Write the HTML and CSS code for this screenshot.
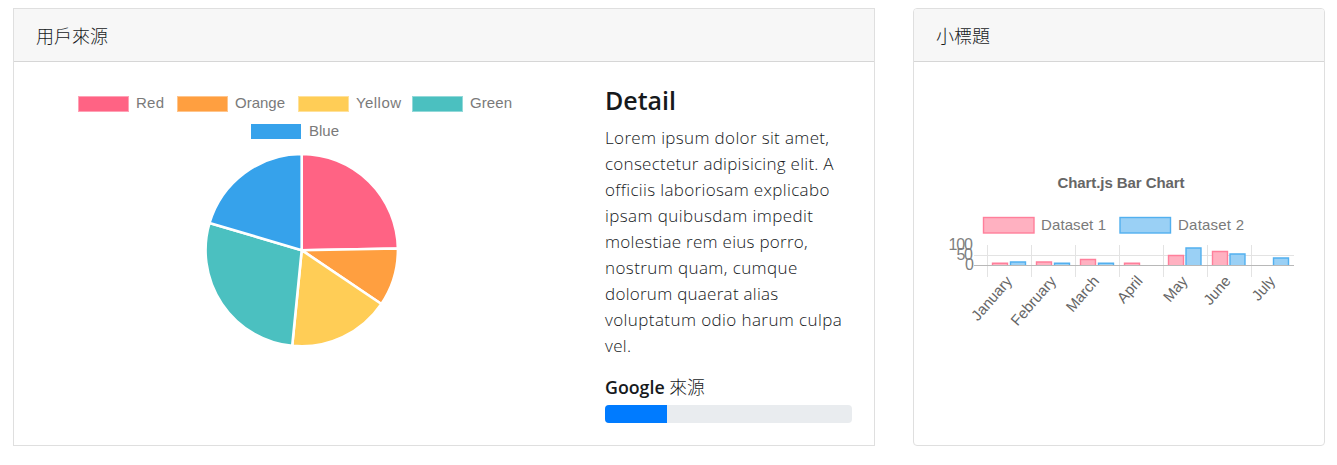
FILE: index.html
```html
<!DOCTYPE html>
<html lang="zh-Hant">
<head>
<meta charset="utf-8">
<title>用戶來源</title>
<link rel="stylesheet" href="styles.css">
</head>
<body>
<main class="cards">
  <section class="card card-source">
    <header class="card-header">用戶來源</header>
    <div class="card-body">
      <svg class="pie-chart" viewBox="36 62 569 383" role="img" aria-label="用戶來源">
        <g class="legend">
          <rect x="78.5" y="96.5" width="50" height="15" fill="#ff6384" stroke="#ffa1b5"/>
          <rect x="177.500" y="96.5" width="50" height="15" fill="#ff9f40" stroke="#ffc58c"/>
          <rect x="298.5" y="96.5" width="50" height="15" fill="#ffcd56" stroke="#ffe19a"/>
          <rect x="412.5" y="96.5" width="50" height="15" fill="#4bc0c0" stroke="#93d9d9"/>
          <rect x="251" y="124" width="50" height="15" fill="#36a2eb"/>
          <text x="136" y="108" textLength="28">Red</text>
          <text x="235" y="108" textLength="50">Orange</text>
          <text x="356" y="108" textLength="45">Yellow</text>
          <text x="470" y="108" textLength="42">Green</text>
          <text x="309" y="136" textLength="30">Blue</text>
        </g>
        <g class="slices">
          <path fill="#ff6384" d="M301.7 250.200V154A96.200 96.200 0 0 1 397.900 248.500Z"/>
          <path fill="#ff9f40" d="M301.7 250.200L397.900 248.500A96.200 96.200 0 0 1 381.400 304Z"/>
          <path fill="#ffcd56" d="M301.7 250.200L381.400 304A96.200 96.200 0 0 1 292.200 345.900Z"/>
          <path fill="#4bc0c0" d="M301.7 250.200L292.200 345.900A96.200 96.200 0 0 1 209.500 222.900Z"/>
          <path fill="#36a2eb" d="M301.7 250.200L209.500 222.900A96.200 96.200 0 0 1 301.7 154Z"/>
        </g>
      </svg>
      <div class="detail">
        <h2 class="detail-title">Detail</h2>
        <p class="detail-text"><span class="line">Lorem ipsum dolor sit amet,</span> <span class="line snug">consectetur adipisicing elit. A</span> <span class="line">officiis laboriosam explicabo</span> <span class="line wide">ipsam quibusdam impedit</span> <span class="line snug">molestiae rem eius porro,</span> <span class="line wide">nostrum quam, cumque</span> <span class="line snug">dolorum quaerat alias</span> <span class="line wide">voluptatum odio harum culpa</span> <span class="line">vel.</span></p>
        <div class="source-label"><strong>Google</strong> 來源</div>
        <div class="progress"><div class="progress-bar" style="width: 25%"></div></div>
      </div>
    </div>
  </section>
  <section class="card card-small">
    <header class="card-header">小標題</header>
    <div class="card-body">
      <svg class="bar-chart" viewBox="936 62 366 383" role="img" aria-label="Chart.js Bar Chart">
        <text class="chart-title" x="1057.500" y="188" textLength="127">Chart.js Bar Chart</text>
        <g class="legend">
          <rect class="pink" x="983.5" y="217.5" width="50.500" height="15.500"/>
          <rect class="blue" x="1120" y="217.5" width="50.500" height="15.500"/>
          <text x="1041" y="230" textLength="65">Dataset 1</text>
          <text x="1178" y="230" textLength="66">Dataset 2</text>
        </g>
        <g class="grid">
          <path d="M974 255.500H1294M987.500 245V277M1031.500 245V277M1075.500 245V277M1119.500 245V277M1163.500 245V277M1207.500 245V277M1251.500 245V277"/>
          <path class="axis" d="M974 265.500H1294"/>
        </g>
        <g class="ticks">
          <text x="948.500" y="250" textLength="24.500">100</text>
          <text x="956.500" y="260" textLength="16.500">50</text>
          <text x="965" y="270" textLength="8">0</text>
        </g>
        <g>
          <path class="pink" d="M992.500 265V263.200H1007.500V265M1036.500 265V262H1051.500V265M1080.500 265V259.500H1095.500V265M1124.500 265V263.200H1139.500V265M1168.500 265V255.500H1183.500V265M1212.500 265V251.500H1227.500V265"/>
          <path class="blue" d="M1010.500 265V262H1025.500V265M1054.500 265V263.200H1069.500V265M1098.500 265V263.200H1113.500V265M1186 265V248H1201V265M1230 265V254H1245V265M1273.500 265V258H1288.500V265"/>
        </g>
        <g class="months">
          <text transform="translate(1013 281.500) rotate(-49)">January</text>
          <text transform="translate(1057 281.500) rotate(-49)">February</text>
          <text transform="translate(1100 281.500) rotate(-49)">March</text>
          <text transform="translate(1143.500 281.500) rotate(-49)">April</text>
          <text transform="translate(1188.500 281.500) rotate(-49)">May</text>
          <text transform="translate(1231.500 281.500) rotate(-49)">June</text>
          <text transform="translate(1276 281.500) rotate(-49)">July</text>
        </g>
      </svg>
    </div>
  </section>
</main>
</body>
</html>
```
FILE: styles.css
```css
* { box-sizing: border-box; }
body {
  margin: 0;
  background: #fff;
  color: #16191c;
  font-family: "Open Sans", "Noto Sans CJK TC", sans-serif;
  font-size: 17px;
}
.cards { display: flex; gap: 38px; height: 465px; padding: 8px 12px 19px 13px; }
.card { display: flex; flex-direction: column; border: 1px solid #dfdfdf; background: #fff; }
.card-source { width: 862px; }
.card-small { width: 412px; border-radius: 4px; overflow: hidden; }
.card-header {
  height: 53px;
  padding: 0 22px;
  border-bottom: 1px solid #d6d6d6;
  background: #f7f7f7;
  font: 300 18px/53px "Noto Sans CJK TC", sans-serif;
}
.card-body { display: flex; flex: 1; padding: 0 22px; }
.pie-chart { width: 569px; height: 383px; flex: none; }
.bar-chart { width: 366px; height: 383px; flex: none; }
.slices path { stroke: #fff; stroke-width: 2.6; stroke-linejoin: round; }
svg text { font-family: "Liberation Sans", Arial, sans-serif; font-size: 15px; fill: #666; }
.legend text { fill: #7a7a7a; }
.ticks text { font-size: 16px; fill: #808080; }
.months text { text-anchor: end; }
.chart-title { font-weight: bold; }
.pink { fill: #ffb1c1; stroke: #ff7f9b; stroke-width: 1.4; }
.blue { fill: #9ad0f5; stroke: #52b0ef; stroke-width: 1.4; }
.grid path { fill: none; stroke: #e3e3e3; }
.grid .axis { stroke: #b8b8b8; }
.detail { width: 247px; padding-top: 22px; }
.detail-title { margin: 0 0 9px; font-size: 25px; font-weight: 600; line-height: 32px; }
.detail-text { margin: 0 0 15px; font-weight: 300; line-height: 26px; white-space: nowrap; }
.line { display: table; letter-spacing: .35px; }
.line.snug { letter-spacing: .27px; }
.line.wide { letter-spacing: .41px; }
.source-label { margin-bottom: 5px; font-size: 17.8px; font-weight: 300; line-height: 26px; }
.source-label strong { font-weight: 600; }
.progress { height: 18px; overflow: hidden; border-radius: 4px; background: #e9ecef; }
.progress-bar { height: 100%; background: #007bff; }
```
